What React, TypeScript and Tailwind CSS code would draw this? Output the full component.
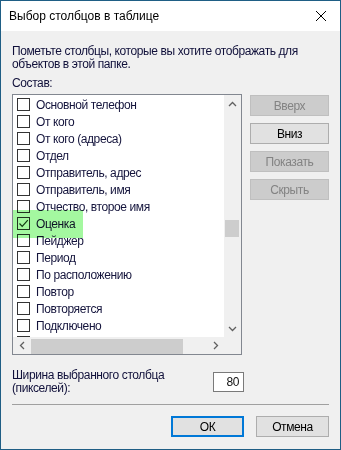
import React from "react";

const items = [
  "Основной телефон",
  "От кого",
  "От кого (адреса)",
  "Отдел",
  "Отправитель, адрес",
  "Отправитель, имя",
  "Отчество, второе имя",
  "Оценка",
  "Пейджер",
  "Период",
  "По расположению",
  "Повтор",
  "Повторяется",
  "Подключено",
  "",
];

function Btn({ label, disabled }: { label: string; disabled?: boolean }) {
  return (
    <div
      className={
        disabled
          ? "h-[21px] w-[79px] flex items-center justify-center border border-[#bfbfbf] bg-[#cccccc] text-[#838383]"
          : "h-[21px] w-[79px] flex items-center justify-center border border-[#adadad] bg-[#e1e1e1] text-black"
      }
    >
      {label}
    </div>
  );
}

export default function App() {
  return (
    <div
      className="w-[341px] h-[450px] border border-[#1f5e85] flex flex-col bg-[#f0f0f0] text-[12px] text-[#111] overflow-hidden"
      style={{ fontFamily: '"Liberation Sans", Arial, sans-serif' }}
    >
      {/* title bar */}
      <div className="h-[30px] bg-white flex items-center justify-between pl-[8px] pr-[10px] shrink-0">
        <span className="text-[12px] text-black leading-none">Выбор столбцов в таблице</span>
        <svg width="12" height="12" viewBox="0 0 12 12" className="mr-[3px]">
          <path d="M1 1 L11 11 M11 1 L1 11" stroke="#000" strokeWidth="1" />
        </svg>
      </div>

      <div className="flex-1 px-[11px] flex flex-col tracking-[-0.4px]">
        <p className="mt-[14px] leading-[13px] text-[#10103a] w-[300px]">
          Пометьте столбцы, которые вы хотите отображать для объектов в этой папке.
        </p>
        <div className="mt-[6px] leading-[13px] text-[#10103a]">Состав:</div>

        <div className="mt-[4px] flex gap-[8px] items-start">
          {/* listbox */}
          <div className="w-[233px] h-[261px] border border-[#828790] bg-white grid grid-cols-[1fr_17px] grid-rows-[1fr_17px] overflow-hidden">
            <div className="relative overflow-hidden pt-[1px]">
              {items.map((t, i) => (
                <div key={i} className="h-[17px] flex items-center pl-[4px] gap-[6px] whitespace-nowrap">
                  <div className="w-[13px] h-[13px] border border-[#333] shrink-0 flex items-center justify-center">
                    {i === 7 && (
                      <svg width="11" height="11" viewBox="0 0 11 11">
                        <path d="M1.5 5.5 L4.2 8.3 L9.8 2.2" stroke="#1a3d1a" strokeWidth="1.2" fill="none" />
                      </svg>
                    )}
                  </div>
                  {t && <span className="text-[#14143c]">{t}</span>}
                </div>
              ))}
              <div className="absolute left-0 top-[115px] w-[70px] h-[28px] bg-[#a4f8a0] mix-blend-multiply pointer-events-none" />
            </div>
            {/* vertical scrollbar */}
            <div className="bg-[#f0f0f0] flex flex-col">
              <div className="h-[17px] flex items-center justify-center">
                <svg width="9" height="6" viewBox="0 0 9 6">
                  <path d="M1 5 L4.5 1.5 L8 5" stroke="#606060" strokeWidth="1.3" fill="none" />
                </svg>
              </div>
              <div className="flex-1 relative">
                <div className="absolute left-[1px] right-[2px] top-[108px] h-[17px] bg-[#cdcdcd]" />
              </div>
              <div className="h-[17px] flex items-center justify-center">
                <svg width="9" height="6" viewBox="0 0 9 6">
                  <path d="M1 1 L4.5 4.5 L8 1" stroke="#606060" strokeWidth="1.3" fill="none" />
                </svg>
              </div>
            </div>
            {/* horizontal scrollbar */}
            <div className="bg-[#f0f0f0] flex">
              <div className="w-[17px] flex items-center justify-center">
                <svg width="6" height="9" viewBox="0 0 6 9">
                  <path d="M5 1 L1.5 4.5 L5 8" stroke="#606060" strokeWidth="1.3" fill="none" />
                </svg>
              </div>
              <div className="flex-1 relative">
                <div className="absolute left-[1px] top-[2px] bottom-0 w-[152px] bg-[#cdcdcd]" />
              </div>
              <div className="w-[17px] flex items-center justify-center">
                <svg width="6" height="9" viewBox="0 0 6 9">
                  <path d="M1 1 L4.5 4.5 L1 8" stroke="#606060" strokeWidth="1.3" fill="none" />
                </svg>
              </div>
            </div>
            <div className="bg-[#f0f0f0]" />
          </div>

          {/* side buttons */}
          <div className="mt-[1px] flex flex-col gap-[7px]">
            <Btn label="Вверх" disabled />
            <Btn label="Вниз" />
            <Btn label="Показать" disabled />
            <Btn label="Скрыть" disabled />
          </div>
        </div>

        <div className="mt-[14px] w-[233px] flex items-center justify-between">
          <div className="leading-[13px] text-[#10103a]">
            Ширина выбранного столбца
            <br />
            (пикселей):
          </div>
          <div className="w-[31px] h-[20px] border border-[#7a7a7a] bg-white flex items-center justify-end pr-[4px] mr-[1px]">
            80
          </div>
        </div>

        <div className="mt-[9px] w-[317px] h-px bg-[#a0a0a0]" />

        <div className="mt-[11px] flex justify-end gap-[12px]">
          <div className="w-[73px] h-[21px] border-2 border-[#0078d7] bg-[#e1e1e1] flex items-center justify-center text-black">
            ОК
          </div>
          <div className="w-[73px] h-[21px] border border-[#adadad] bg-[#e1e1e1] flex items-center justify-center text-black">
            Отмена
          </div>
        </div>
      </div>
    </div>
  );
}
